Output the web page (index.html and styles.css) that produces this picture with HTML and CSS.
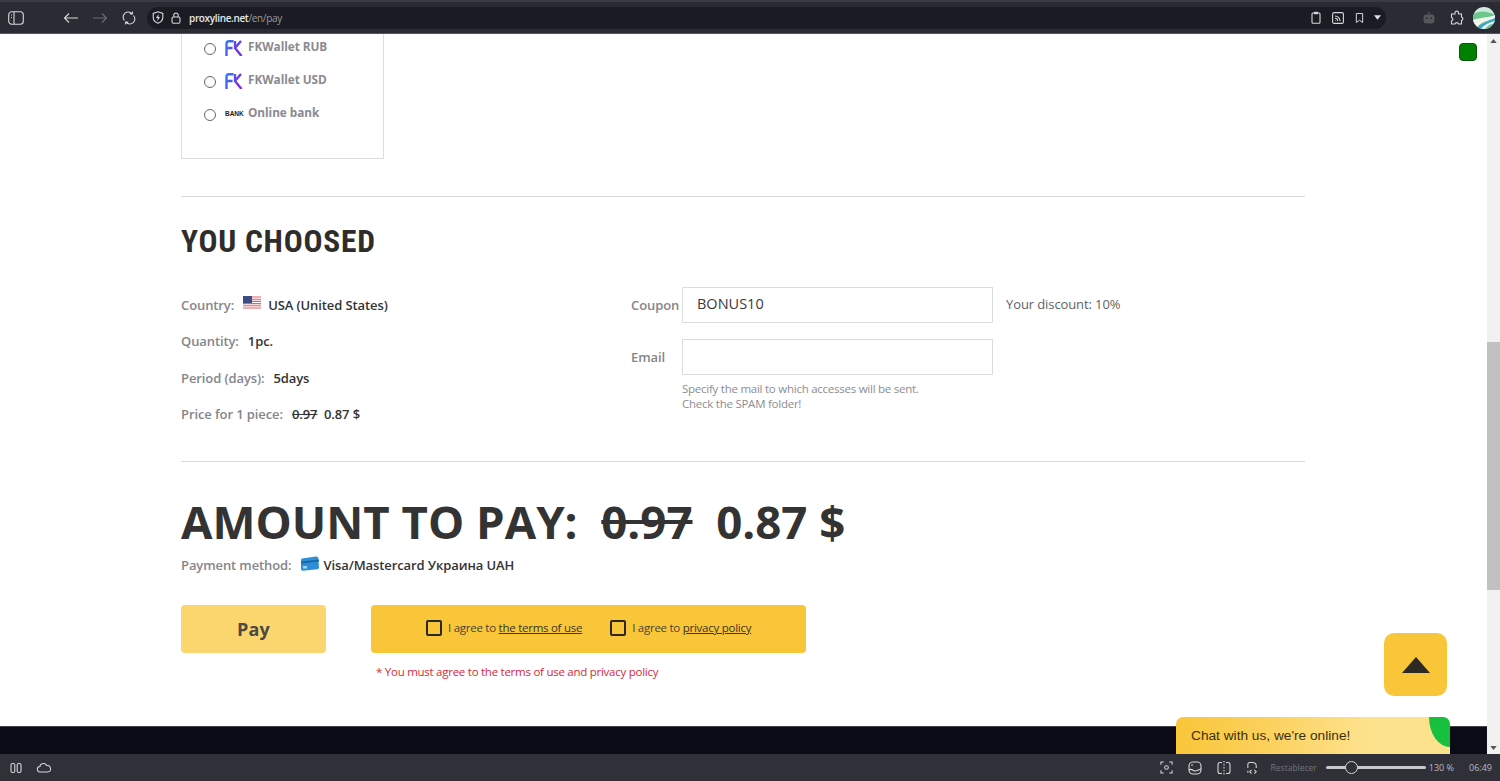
FILE: index.html
```html
<!DOCTYPE html>
<html lang="en">
<head>
  <meta charset="UTF-8" />
  <title>Proxyline - Pay</title>
  <link rel="stylesheet" href="styles.css">
</head>
<body>
  <!-- Browser toolbar -->
  <header class="toolbar">
    <svg class="tool-icon side-icon" viewBox="0 0 16 14" width="16" height="14"><rect x="0.7" y="0.7" width="14.6" height="12.6" rx="3"/><path d="M6 1v12M3 4h1M3 6.500h1"/></svg>
    <div class="nav-icons">
      <svg class="tool-icon" viewBox="0 0 16 12" width="16" height="12"><path d="M15 6H1.500M6 1.500L1.500 6 6 10.500"/></svg>
      <svg class="tool-icon dim" viewBox="0 0 16 12" width="16" height="12"><path d="M1 6h13.500M10 1.500L14.500 6 10 10.500"/></svg>
      <svg class="tool-icon reload" viewBox="0 0 14 14" width="14" height="14"><path d="M2.500 9.500A5 5 0 0 1 10 2.600M11.500 4.500A5 5 0 0 1 4 11.400M10.600 .6l-.4 2.400-2.400-.4M3.400 13.400l.4-2.400 2.400.4"/></svg>
    </div>
    <div class="address">
      <svg class="tool-icon" viewBox="0 0 12 13" width="12" height="13"><path d="M6 .8l4.800 1.600v4c0 2.800-2 4.600-4.800 5.800C3.200 11 1.200 9.200 1.200 6.400v-4z"/><path class="solid" d="M6.600 3L4 7h1.700l-.3 3L8 6H6.300z"/></svg>
      <svg class="tool-icon" viewBox="0 0 10 12" width="10" height="12"><rect x="1" y="5" width="8" height="6.300" rx="1.500"/><path d="M2.800 5V3.200a2.200 2.200 0 0 1 4.400 0V5"/></svg>
      <span class="url"><b>proxyline.net</b>/en/pay</span>
      <div class="address-right">
        <svg class="tool-icon" viewBox="0 0 10 13" width="10" height="13"><rect x="1" y="2" width="8" height="10.300" rx="1"/><path class="solid" d="M3 .8h4v2.400H3z"/></svg>
        <svg class="tool-icon" viewBox="0 0 12 12" width="12" height="12"><rect x=".6" y=".6" width="10.800" height="10.800" rx="1.500"/><path d="M3 4a5 5 0 0 1 5 5M3 6.300A2.800 2.800 0 0 1 5.700 9M3 8.600h.4"/></svg>
        <svg class="tool-icon" viewBox="0 0 10 12" width="9" height="12"><path d="M1.500 1h7v10L5 8.500 1.500 11z"/></svg>
        <svg class="caret" viewBox="0 0 8 5" width="7" height="5"><path d="M0 0h8L4 5z"/></svg>
      </div>
    </div>
    <div class="toolbar-right">
      <svg class="robot" viewBox="0 0 14 12" width="14" height="12"><circle cx="7" cy="1" r="1"/><path fill-rule="evenodd" d="M4.500 2.500h5a3 3 0 0 1 3 3v3a3 3 0 0 1-3 3h-5a3 3 0 0 1-3-3v-3a3 3 0 0 1 3-3zM4 5.500v1.500h1.500V5.500zM8.500 5.500v1.500H10V5.500z"/></svg>
      <svg class="tool-icon puzzle" viewBox="0 0 15 15" width="15" height="15"><path d="M5 2.500a1.800 1.800 0 0 1 3.500 0V4h3v3a1.800 1.800 0 0 1 0 3.500V14H8.500a1.800 1.800 0 0 0-3.500 0H1.500v-3a1.800 1.800 0 0 0 0-3.500V4H5z"/></svg>
      <svg class="avatar" viewBox="0 0 22 22" width="22" height="22">
        <defs><clipPath id="avatar-clip"><circle cx="11" cy="11" r="11"/></clipPath></defs>
        <g clip-path="url(#avatar-clip)">
          <rect width="22" height="22" fill="#cfe9e0"/>
          <path d="M0 8C6 3 14 4 22 8v14H0z" fill="#6cc58a"/>
          <path d="M0 13C8 10 15 11 22 8v3C15 14 8 14 3 22H0z" fill="#f2f7ee"/>
          <path d="M3 22C8 16 15 15 22 11v5c-5 2-9 3-11 6z" fill="#3f9fd8"/>
          <path d="M8 22c3-4 7-6 14-8v2c-5 1-8 3-10 6z" fill="#eaf6fb"/>
        </g>
      </svg>
    </div>
  </header>

  <div class="viewport">
    <main class="page">
      <div class="container">
        <!-- Payment methods -->
        <div class="method-box">
          <label class="method-row">
            <input type="radio" name="method" />
            <svg class="fk-logo" viewBox="0 0 18 16" width="18" height="16"><use href="#fk-mark"/></svg>
            <span>FKWallet RUB</span>
          </label>
          <label class="method-row">
            <input type="radio" name="method" />
            <svg class="fk-logo" viewBox="0 0 18 16" width="18" height="16">
              <defs>
                <linearGradient id="fk-grad" gradientUnits="userSpaceOnUse" x1="0" y1="4" x2="14" y2="10"><stop offset="0" stop-color="#2f7cf0"/><stop offset="1" stop-color="#7a2fe0"/></linearGradient>
                <g id="fk-mark" fill="none" stroke="url(#fk-grad)" stroke-width="2.400"><path d="M8.500 1.200H4Q1.500 1.200 1.500 4v12M1.500 8h6"/><path d="M16 1L10 8l6.500 8M10 1v6"/></g>
              </defs>
              <use href="#fk-mark"/>
            </svg>
            <span>FKWallet USD</span>
          </label>
          <label class="method-row">
            <input type="radio" name="method" />
            <span class="bank-logo">BANK</span>
            <span>Online bank</span>
          </label>
        </div>

        <hr class="divider first" />

        <h2 class="section-title">YOU CHOOSED</h2>

        <div class="summary">
          <div class="summary-list">
            <div class="summary-row">
              <span class="label">Country:</span>
              <svg class="flag" viewBox="0 0 18 14" width="18" height="14">
                <rect width="18" height="14" fill="#fff"/>
                <path d="M0 1h18M0 3.200h18M0 5.400h18M0 7.600h18M0 9.800h18M0 12h18" stroke="#e0606c" stroke-width="1.100"/>
                <rect width="9" height="7" fill="#3c4a86"/>
              </svg>
              <span class="value">USA (United States)</span>
            </div>
            <div class="summary-row">
              <span class="label">Quantity:</span>
              <span class="value">1pc.</span>
            </div>
            <div class="summary-row">
              <span class="label">Period (days):</span>
              <span class="value">5days</span>
            </div>
            <div class="summary-row">
              <span class="label">Price for 1 piece:</span>
              <span class="value"><s>0.97</s>&nbsp; 0.87 $</span>
            </div>
          </div>

          <div class="summary-form">
            <div class="form-row">
              <label class="form-label" for="coupon">Coupon</label>
              <input class="form-input" id="coupon" type="text" value="BONUS10" />
              <span class="discount">Your discount: 10%</span>
            </div>
            <div class="form-row">
              <label class="form-label" for="email">Email</label>
              <input class="form-input" id="email" type="text" />
            </div>
            <p class="form-hint">Specify the mail to which accesses will be sent.<br />Check the SPAM folder!</p>
          </div>
        </div>

        <hr class="divider" />

        <h1 class="amount">AMOUNT TO PAY:&nbsp; <s>0.97</s>&nbsp; 0.87 $</h1>

        <div class="pay-method">
          <span class="label">Payment method:</span>
          <svg class="card-icon" viewBox="0 0 18 15" width="18" height="15">
            <path d="M1 2.500L15 .5q2-.2 2.300 1.500l.7 9.500q0 1.500-1.500 1.800L2 14.800q-1.500 0-2-1.500V4q0-1 1-1.500z" fill="#2f8fd6"/>
            <path d="M0 5.500L18 3.500v2L0 7.500z" fill="#1a66a8"/>
            <rect x="2" y="10" width="4" height="2.500" fill="#9fd4f2"/>
          </svg>
          <span class="value">Visa/Mastercard Украина UAH</span>
        </div>

        <div class="actions">
          <button class="pay-btn" type="button">Pay</button>
          <div class="agree-box">
            <label class="agree-item"><input type="checkbox" /><span>I agree to <a href="#">the terms of use</a></span></label>
            <label class="agree-item"><input type="checkbox" /><span>I agree to <a href="#">privacy policy</a></span></label>
          </div>
        </div>
        <p class="agree-error">* You must agree to the terms of use and privacy policy</p>
      </div>

      <footer class="page-footer"></footer>

      <!-- Floating widgets -->
      <div class="green-square"></div>
      <button class="to-top" type="button" aria-label="Up">
        <svg viewBox="0 0 28 16" width="28" height="16"><path d="M14 0l14 16H0z" fill="#2d2a26"/></svg>
      </button>
      <div class="chat-tab">
        <span>Chat with us, we're online!</span>
        <i class="chat-leaf"></i>
      </div>
    </main>

    <div class="scrollbar">
      <svg viewBox="0 0 8 5" width="7" height="4"><path d="M4 0l4 5H0z"/></svg>
      <div class="scroll-track"><div class="scroll-thumb"></div></div>
      <svg viewBox="0 0 8 5" width="7" height="4"><path d="M0 0h8L4 5z"/></svg>
    </div>
  </div>

  <!-- Browser status bar -->
  <div class="statusbar">
    <svg class="tool-icon" viewBox="0 0 12 12" width="12" height="12"><rect x="1" y="1.500" width="3.800" height="9" rx="1.500"/><rect x="7.200" y="1.500" width="3.800" height="9" rx="1.500"/></svg>
    <svg class="tool-icon cloud" viewBox="0 0 16 12" width="16" height="11"><path d="M4 11a3 3 0 0 1-.5-6A4 4 0 0 1 11 3.800 3.600 3.600 0 0 1 12 11z"/></svg>
    <div class="status-right">
      <svg class="tool-icon" viewBox="0 0 14 14" width="13" height="13"><circle cx="7" cy="7" r="2"/><path d="M1 4V1h3M10 1h3v3M13 10v3h-3M4 13H1v-3"/></svg>
      <svg class="tool-icon" viewBox="0 0 14 14" width="14" height="14"><rect x="1" y="1" width="12" height="12" rx="4"/><path d="M1 9c3-2 4 1 6 1s3-1 6-2M3 4h2"/></svg>
      <svg class="tool-icon" viewBox="0 0 14 14" width="14" height="14"><path d="M5 1.500H3Q1 1.500 1 3.500v7q0 2 2 2h2M9 1.500h2q2 0 2 2v7q0 2-2 2H9"/><path d="M7 0v14" stroke-dasharray="1.500 1.500"/></svg>
      <svg class="tool-icon" viewBox="0 0 14 14" width="13" height="14"><path d="M2 7V3q0-2 2-2h4q3 1 3 3v3M2 10v2M6 9l-2 2 2 2M9 9l2 2-2 2"/></svg>
      <span class="reset">Restablecer</span>
      <div class="zoom-slider"><i class="zoom-knob"></i></div>
      <span class="zoom-value">130 %</span>
      <span class="clock">06:49</span>
    </div>
  </div>
</body>
</html>
```

FILE: styles.css
```css
* {
  margin: 0;
  padding: 0;
  box-sizing: border-box;
}

html, body {
  height: 100%;
  overflow: hidden;
}

body {
  display: flex;
  flex-direction: column;
  font-family: 'Open Sans', 'Noto Sans', sans-serif;
  font-size: 13px;
  color: #333;
  background-color: #fff;
}

.tool-icon {
  flex: none;
  fill: none;
  stroke: #d6d7da;
  stroke-width: 1.1;
}

.tool-icon.dim {
  stroke: #6b6c73;
}

.tool-icon .solid {
  fill: #d6d7da;
  stroke: none;
}

/* Toolbar */
.toolbar {
  display: flex;
  align-items: center;
  flex: none;
  height: 34px;
  padding: 0 5px 0 8px;
  background-color: #2a2b33;
  border-top: 2px solid #3b3c43;
  border-bottom: 1px solid #55565c;
}

.nav-icons {
  display: flex;
  align-items: center;
  gap: 13px;
  margin-left: 39px;
}

.reload {
  margin-left: 1px;
}

.address {
  display: flex;
  align-items: center;
  gap: 7px;
  width: 1239px;
  height: 22px;
  margin-left: 11px;
  padding: 0 5px 0 5px;
  background-color: #1b1c23;
  border-radius: 11px;
}

.url {
  margin-left: 1px;
  font-size: 10px;
  letter-spacing: -0.35px;
  color: #9a9ba1;
}

.url b {
  font-weight: 600;
  color: #e6e7ea;
}

.address-right {
  display: flex;
  align-items: center;
  gap: 11px;
  margin-left: auto;
}

.caret {
  fill: #e0e1e4;
  margin-left: -1px;
}

.toolbar-right {
  display: flex;
  align-items: center;
  margin-left: auto;
}

.robot {
  fill: #55565c;
  margin-right: 14px;
}

.puzzle {
  margin-right: 8px;
}

.avatar {
  flex: none;
}

/* Page area */
.viewport {
  display: flex;
  flex: 1;
  min-height: 0;
}

.page {
  position: relative;
  display: flex;
  flex-direction: column;
  flex: 1;
  min-width: 0;
}

.container {
  width: 1124px;
  margin-left: 181px;
}

.method-box {
  width: 203px;
  height: 125px;
  padding-left: 22px;
  border: 1px solid #dedede;
  border-top: 0;
}

.method-row {
  display: flex;
  align-items: center;
  height: 33px;
  position: relative;
  top: -3px;
  font-size: 12.5px;
  letter-spacing: -0.05px;
  font-weight: 700;
  color: #8a8a90;
}

.method-row input {
  flex: none;
  width: 12px;
  height: 12px;
  margin: 3px 9px 0 0;
  appearance: none;
  background-color: #fff;
  border: 1px solid #666;
  border-radius: 50%;
}

.method-row span:last-child {
  margin-top: -4px;
  font-size: 11.8px;
}

.fk-logo {
  flex: none;
  margin: 0 5px 0 0;
}

.bank-logo {
  width: 18px;
  margin-right: 5px;
  font-family: 'Liberation Sans', sans-serif;
  font-size: 6.500px;
  font-weight: 700;
  color: #222;
}

.divider {
  height: 1px;
  background-color: #d9d9d9;
  border: 0;
  margin: 28.500px 0 0;
}

.divider.first {
  margin-top: 37px;
}

.section-title {
  margin-top: 26px;
  font-family: 'Roboto Condensed', 'Liberation Sans Narrow', Roboto, sans-serif;
  font-size: 31.500px;
  line-height: 37px;
  font-weight: 700;
  letter-spacing: 0.75px;
  color: #2f2d2b;
}

.summary {
  display: flex;
  margin-top: 26.500px;
}

.summary-list {
  width: 450px;
}

.summary-row {
  display: flex;
  align-items: center;
  height: 36.5px;
}

.label {
  font-weight: 600;
  letter-spacing: -0.1px;
  color: #85858a;
}

.value {
  font-weight: 600;
  letter-spacing: -0.1px;
  color: #333;
}

.summary-row .label {
  margin-right: 9px;
}

.flag {
  flex: none;
  margin-right: 7px;
  margin-top: -4px;
}

.summary-form {
  margin-top: 0.5px;
}

.form-row {
  display: flex;
  align-items: center;
  height: 36px;
  margin-bottom: 16px;
}

.form-label {
  width: 51px;
  margin-top: -1px;
  font-weight: 600;
  letter-spacing: -0.1px;
  color: #85858a;
}

.form-input {
  width: 311px;
  height: 36px;
  padding: 0 14px 4px;
  font-family: inherit;
  font-size: 14.500px;
  color: #3a3a3c;
  border: 1px solid #dcdcdc;
  outline: none;
}

.discount {
  margin: -2px 0 0 13px;
  letter-spacing: -0.1px;
  color: #5f5f63;
}

.form-hint {
  margin: -10px 0 0 51px;
  font-size: 11.500px;
  letter-spacing: -0.25px;
  line-height: 15px;
  color: #8d8d92;
}

.amount {
  margin-top: 29px;
  font-size: 45.600px;
  line-height: 60px;
  font-weight: 700;
  color: #333;
  white-space: nowrap;
}

.pay-method {
  display: flex;
  align-items: center;
  height: 24px;
  margin-top: 2px;
}

.pay-method .label {
  margin-right: 9px;
}

.card-icon {
  flex: none;
  margin: -3px 5px 0 0;
}

.actions {
  display: flex;
  gap: 45px;
  margin-top: 28px;
}

.pay-btn {
  width: 145px;
  height: 48px;
  font-family: inherit;
  font-size: 18px;
  font-weight: 700;
  letter-spacing: 0.2px;
  color: #4d4a42;
  background-color: #fbd66e;
  border: none;
  border-radius: 4px;
  cursor: pointer;
}

.agree-box {
  display: flex;
  align-items: center;
  gap: 28px;
  width: 435px;
  height: 48px;
  padding: 0 0 2px 55px;
  font-size: 11.500px;
  letter-spacing: -0.26px;
  color: #4a4433;
  background-color: #f9c639;
  border-radius: 4px;
}

.agree-item {
  display: flex;
  align-items: center;
  gap: 6px;
}

.agree-item span {
  margin-top: -1px;
}

.agree-item a {
  color: #3a3526;
}

.agree-item input {
  width: 16px;
  height: 16px;
  appearance: none;
  border: 2px solid #2a2a2a;
  border-radius: 2px;
}

.agree-error {
  height: 20px;
  margin: 9px 0 0 195px;
  font-size: 11.500px;
  letter-spacing: -0.26px;
  line-height: 20px;
  color: #d8283c;
}

.page-footer {
  flex: none;
  height: 28px;
  margin-top: auto;
  background-color: #0a0b16;
  border-top: 1px solid #43444b;
}

.green-square {
  position: absolute;
  top: 9px;
  right: 10px;
  width: 18px;
  height: 18px;
  background-color: #008000;
  border: 1px solid #0b5a0b;
  border-radius: 4px;
}

.to-top {
  position: absolute;
  top: 599px;
  left: 1384px;
  display: flex;
  align-items: center;
  justify-content: center;
  width: 63px;
  height: 63px;
  background-color: #f9c639;
  border: none;
  border-radius: 10px;
}

.chat-tab {
  position: absolute;
  left: 1176px;
  bottom: 0;
  width: 274px;
  height: 37px;
  padding: 11px 15px;
  overflow: hidden;
  font-family: 'Liberation Sans', Arial, sans-serif;
  font-size: 13.700px;
  color: #3b2f10;
  background: linear-gradient(90deg, #f9c639 0%, #fbd25f 35%, #fde28d 70%, #fde28d 100%);
  border-radius: 7px 7px 0 0;
}

.chat-leaf {
  position: absolute;
  top: 0;
  right: 0;
  width: 21px;
  height: 30px;
  background-color: #17c03f;
  border-radius: 0 0 0 100%;
}

/* Scrollbar */
.scrollbar {
  display: flex;
  flex-direction: column;
  align-items: center;
  flex: none;
  width: 13px;
  padding: 5px 0 4px;
  fill: #555;
  background-color: #f1f1f1;
}

.scroll-track {
  flex: 1;
  width: 100%;
  padding-top: 299px;
}

.scroll-thumb {
  height: 248px;
  background-color: #c1c1c1;
}

/* Status bar */
.statusbar {
  display: flex;
  align-items: center;
  flex: none;
  height: 27px;
  padding: 0 8px 0 10px;
  font-size: 9px;
  background-color: #2f3038;
}

.cloud {
  margin-left: 14px;
}

.status-right {
  display: flex;
  align-items: center;
  gap: 15px;
  margin-left: auto;
}

.reset {
  margin-left: -3px;
  font-size: 8.500px;
  color: #74757b;
}

.zoom-slider {
  position: relative;
  width: 100px;
  height: 3px;
  margin: 0 -12px 0 -6px;
  background-color: #c8c9cd;
  border-radius: 2px;
}

.zoom-knob {
  position: absolute;
  top: -5px;
  left: 19px;
  width: 13px;
  height: 13px;
  background-color: #2f3038;
  border: 1px solid #d6d7da;
  border-radius: 50%;
}

.zoom-value,
.clock {
  color: #b9babf;
}

.clock {
  margin-left: 0;
}
```
